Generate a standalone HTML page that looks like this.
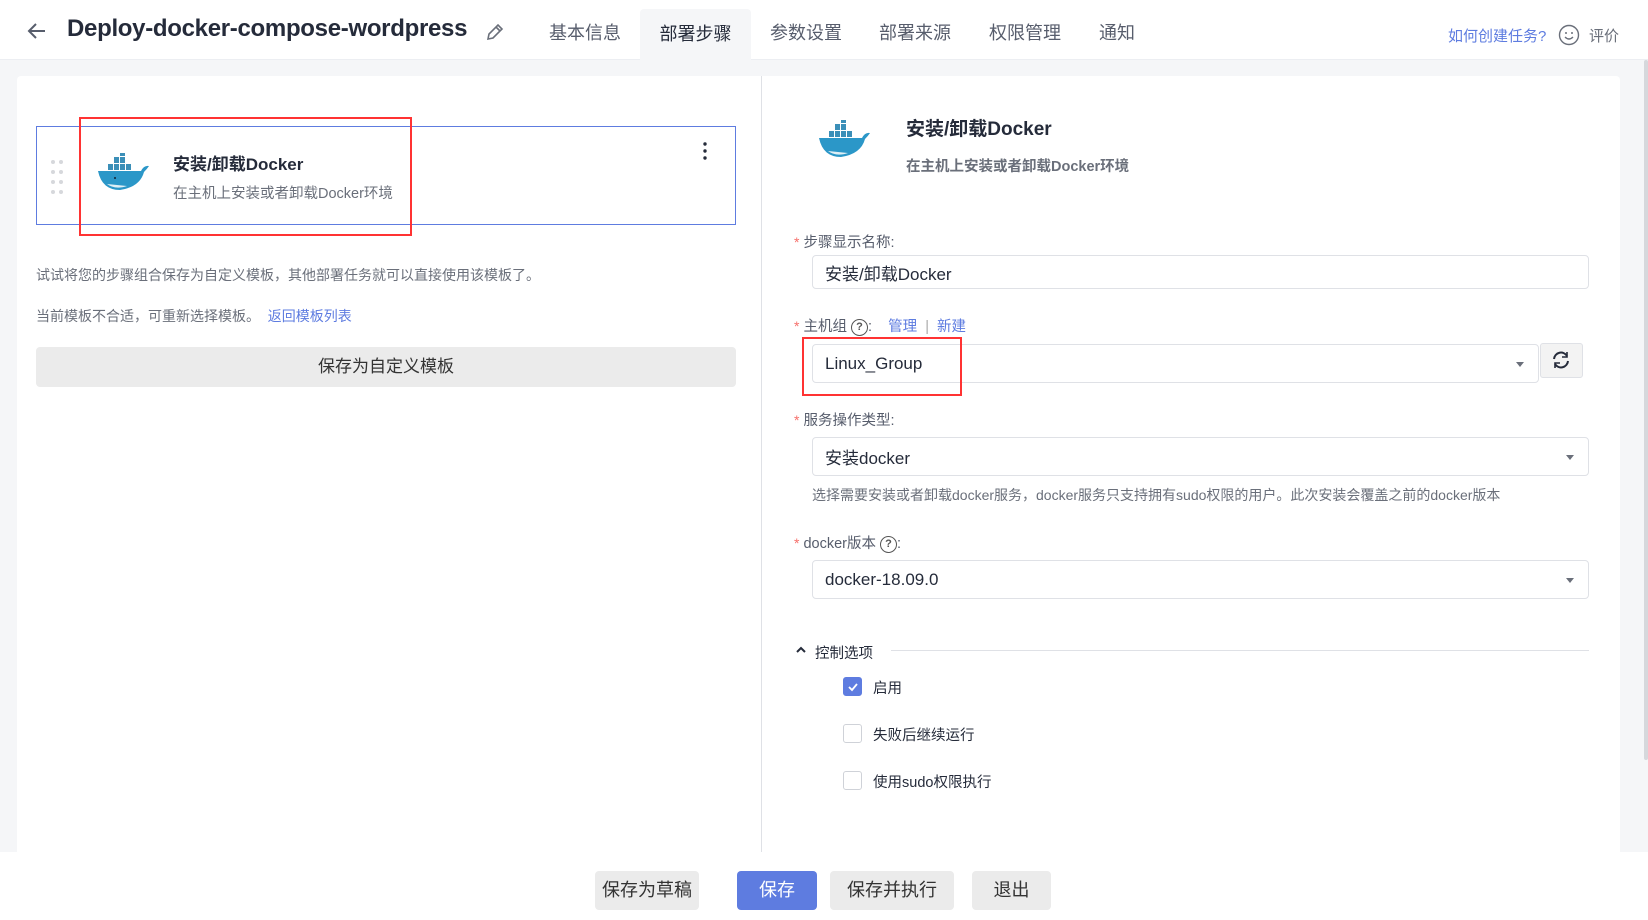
<!DOCTYPE html>
<html><head><meta charset="utf-8"><style>
*{box-sizing:border-box;margin:0;padding:0}
body{width:1648px;height:920px;overflow:hidden;background:#f5f6f8;font-family:"Liberation Sans","Noto Sans CJK SC",sans-serif;color:#252b3a;position:relative}
.abs{position:absolute}
.hdr{left:0;top:0;width:1648px;height:60px;background:#fff;border-bottom:1px solid #eceef2}
.tab{top:0;height:60px;line-height:66px;font-size:18px;color:#575d6c;text-align:center}
.card{background:#fff;border-radius:4px}
.lbl{font-size:14.5px;color:#575d6c}
.star{color:#f66f6a;font-size:14px;margin-right:4px}
.inp{border:1px solid #dfe1e6;border-radius:4px;background:#fff;font-size:17px;color:#252b3a;padding-left:12px;display:flex;align-items:center}
.caret{position:absolute;right:14px;top:50%;margin-top:-2px;border-left:4px solid transparent;border-right:4px solid transparent;border-top:5px solid #6a6f7a}
.cb{width:19px;height:19px;border:1px solid #cfd2d8;border-radius:3px;background:#fff}
.btn{top:871px;height:39px;border-radius:4px;background:#ebebeb;font-size:18px;color:#333;text-align:center;line-height:39px}
.q{display:inline-block;width:17px;height:17px;border:1.5px solid #555;border-radius:50%;font-size:11px;line-height:14px;text-align:center;color:#555;font-weight:bold;vertical-align:1px}
</style></head><body>
<div class="abs hdr"></div>
<svg class="abs" style="left:27px;top:22px" width="20" height="18" viewBox="0 0 20 18"><path d="M18 9H3M9 2L2 9l7 7" fill="none" stroke="#575d6c" stroke-width="2"/></svg>
<div class="abs" style="left:67px;top:15px;font-size:24px;font-weight:bold;color:#252b3a;letter-spacing:-0.3px">Deploy-docker-compose-wordpress</div>
<svg class="abs" style="left:485px;top:22px" width="20" height="20" viewBox="0 0 20 20"><path d="M3 17l1-5L13 3l4 4-9 9zM11 5l4 4" fill="none" stroke="#6a6f7a" stroke-width="1.6"/></svg>
<div class="abs tab" style="left:540px;width:90px">基本信息</div>
<div class="abs tab" style="left:640px;top:9px;height:51px;width:111px;background:#f5f6f8;line-height:50px;color:#252b3a;border-radius:4px 4px 0 0">部署步骤</div>
<div class="abs tab" style="left:761px;width:90px">参数设置</div>
<div class="abs tab" style="left:870px;width:90px">部署来源</div>
<div class="abs tab" style="left:980px;width:90px">权限管理</div>
<div class="abs tab" style="left:1090px;width:54px">通知</div>
<div class="abs" style="left:1448px;top:25px;font-size:15px;color:#5e7ce0">如何创建任务?</div>
<svg class="abs" style="left:1558px;top:24px" width="22" height="22" viewBox="0 0 22 22"><circle cx="11" cy="11" r="9.5" fill="none" stroke="#6a6f7a" stroke-width="1.4"/><circle cx="8" cy="9" r="1" fill="#6a6f7a"/><circle cx="14" cy="9" r="1" fill="#6a6f7a"/><path d="M7 13q4 4 8 0" fill="none" stroke="#6a6f7a" stroke-width="1.3"/></svg>
<div class="abs" style="left:1589px;top:25px;font-size:15px;color:#6a6f7a">评价</div>
<div class="abs" style="left:1644px;top:60px;width:4px;height:700px;background:#d6d8dc;border-radius:2px"></div>

<div class="abs card" style="left:17px;top:76px;width:1603px;height:790px"></div>
<div class="abs" style="left:761px;top:76px;width:1px;height:776px;background:#dfe1e6"></div>

<!-- left -->
<div class="abs" style="left:36px;top:126px;width:700px;height:99px;border:1px solid #5e7ce0;background:#fff"></div>
<svg class="abs" style="left:50px;top:160px" width="14" height="34"><g fill="#d6d8dc"><circle cx="3" cy="2" r="2"/><circle cx="11" cy="2" r="2"/><circle cx="3" cy="12" r="2"/><circle cx="11" cy="12" r="2"/><circle cx="3" cy="22" r="2"/><circle cx="11" cy="22" r="2"/><circle cx="3" cy="32" r="2"/><circle cx="11" cy="32" r="2"/></g></svg>
<svg class="abs" style="left:95px;top:153px" width="60" height="42" viewBox="0 0 60 42"><g fill="#3b8fb8"><rect x="13" y="11" width="5" height="6"/><rect x="19" y="11" width="5" height="6"/><rect x="25" y="11" width="5" height="6"/><rect x="31" y="11" width="5" height="6"/><rect x="19" y="4" width="5" height="6"/><rect x="25" y="4" width="5" height="6"/><rect x="25" y="-3" width="5" height="6"/></g><path d="M3 18h43q3-6 8-5q-2 3-5 6q-4 15-24 18Q7 37 3 18z" fill="#2b97c8"/><path d="M12 31q8 6 20 2" fill="#dfeff5"/><circle cx="20" cy="25" r="1" fill="#123"/></svg>
<div class="abs" style="left:173px;top:150px;font-size:17px;font-weight:bold;color:#252b3a">安装/卸载Docker</div>
<div class="abs" style="left:173px;top:182px;font-size:14.5px;color:#6a6f7a">在主机上安装或者卸载Docker环境</div>
<svg class="abs" style="left:702px;top:142px" width="6" height="18"><g fill="#252b3a"><circle cx="3" cy="2" r="1.7"/><circle cx="3" cy="9" r="1.7"/><circle cx="3" cy="16" r="1.7"/></g></svg>
<div class="abs" style="left:79px;top:117px;width:333px;height:119px;border:2px solid #f33"></div>
<div class="abs" style="left:36px;top:265px;font-size:14px;color:#6a6f7a">试试将您的步骤组合保存为自定义模板，其他部署任务就可以直接使用该模板了。</div>
<div class="abs" style="left:36px;top:306px;font-size:14px;color:#6a6f7a">当前模板不合适，可重新选择模板。 &nbsp;<span style="color:#5e7ce0">返回模板列表</span></div>
<div class="abs" style="left:36px;top:347px;width:700px;height:40px;background:#ebebeb;border-radius:4px;text-align:center;line-height:40px;font-size:17px;color:#333">保存为自定义模板</div>

<!-- right -->
<svg class="abs" style="left:816px;top:120px" width="60" height="42" viewBox="0 0 60 42"><g fill="#3b8fb8"><rect x="13" y="11" width="5" height="6"/><rect x="19" y="11" width="5" height="6"/><rect x="25" y="11" width="5" height="6"/><rect x="31" y="11" width="5" height="6"/><rect x="19" y="4" width="5" height="6"/><rect x="25" y="4" width="5" height="6"/><rect x="25" y="-3" width="5" height="6"/></g><path d="M3 18h43q3-6 8-5q-2 3-5 6q-4 15-24 18Q7 37 3 18z" fill="#2b97c8"/><path d="M12 31q8 6 20 2" fill="#dfeff5"/></svg>
<div class="abs" style="left:906px;top:114px;font-size:19px;font-weight:bold;color:#252b3a">安装/卸载Docker</div>
<div class="abs" style="left:906px;top:155px;font-size:14.5px;font-weight:bold;color:#6a6f7a">在主机上安装或者卸载Docker环境</div>

<div class="abs lbl" style="left:794px;top:231px"><span class="star">*</span>步骤显示名称:</div>
<div class="abs inp" style="left:812px;top:255px;width:777px;height:34px">安装/卸载Docker</div>

<div class="abs lbl" style="left:794px;top:315px"><span class="star">*</span>主机组 <span class="q">?</span>: &nbsp;&nbsp; <span style="color:#5e7ce0">管理</span> &nbsp;<span style="color:#aaa">|</span>&nbsp; <span style="color:#5e7ce0">新建</span></div>
<div class="abs inp" style="left:812px;top:344px;width:727px;height:39px">Linux_Group<span class="caret"></span></div>
<div class="abs" style="left:1540px;top:343px;width:43px;height:35px;background:#f3f3f3;border:1px solid #dfe1e6;border-radius:3px"></div>
<svg class="abs" style="left:1551px;top:350px" width="20" height="20" viewBox="0 0 20 20"><path d="M3 9a7 7 0 0 1 13-3M17 11a7 7 0 0 1-13 3" fill="none" stroke="#252b3a" stroke-width="2"/><path d="M16 2v5h-5M4 18v-5h5" fill="none" stroke="#252b3a" stroke-width="1.6"/></svg>
<div class="abs" style="left:802px;top:337px;width:160px;height:59px;border:2px solid #f33"></div>

<div class="abs lbl" style="left:794px;top:409px"><span class="star">*</span>服务操作类型:</div>
<div class="abs inp" style="left:812px;top:437px;width:777px;height:39px">安装docker<span class="caret"></span></div>
<div class="abs" style="left:812px;top:485px;font-size:14px;color:#6a6f7a">选择需要安装或者卸载docker服务，docker服务只支持拥有sudo权限的用户。此次安装会覆盖之前的docker版本</div>

<div class="abs lbl" style="left:794px;top:532px"><span class="star">*</span>docker版本 <span class="q">?</span>:</div>
<div class="abs inp" style="left:812px;top:560px;width:777px;height:39px">docker-18.09.0<span class="caret"></span></div>

<svg class="abs" style="left:796px;top:646px" width="10" height="8"><path d="M1 6l4-4 4 4" fill="none" stroke="#252b3a" stroke-width="2"/></svg>
<div class="abs" style="left:815px;top:642px;font-size:14.5px;color:#252b3a">控制选项</div>
<div class="abs" style="left:891px;top:650px;width:698px;height:1px;background:#dfe1e6"></div>
<div class="abs cb" style="left:843px;top:677px;background:#5e7ce0;border-color:#5e7ce0"></div>
<svg class="abs" style="left:847px;top:681px" width="12" height="12"><path d="M2 6l3 3 5-6" fill="none" stroke="#fff" stroke-width="1.8"/></svg>
<div class="abs" style="left:873px;top:677px;font-size:14.5px">启用</div>
<div class="abs cb" style="left:843px;top:724px"></div>
<div class="abs" style="left:873px;top:724px;font-size:14.5px">失败后继续运行</div>
<div class="abs cb" style="left:843px;top:771px"></div>
<div class="abs" style="left:873px;top:771px;font-size:14.5px">使用sudo权限执行</div>

<!-- bottom -->
<div class="abs" style="left:0;top:852px;width:1648px;height:68px;background:#fff"></div>
<div class="abs btn" style="left:595px;width:104px">保存为草稿</div>
<div class="abs btn" style="left:737px;width:80px;background:#5e7ce0;color:#fff">保存</div>
<div class="abs btn" style="left:830px;width:124px">保存并执行</div>
<div class="abs btn" style="left:972px;width:79px">退出</div>
</body></html>
